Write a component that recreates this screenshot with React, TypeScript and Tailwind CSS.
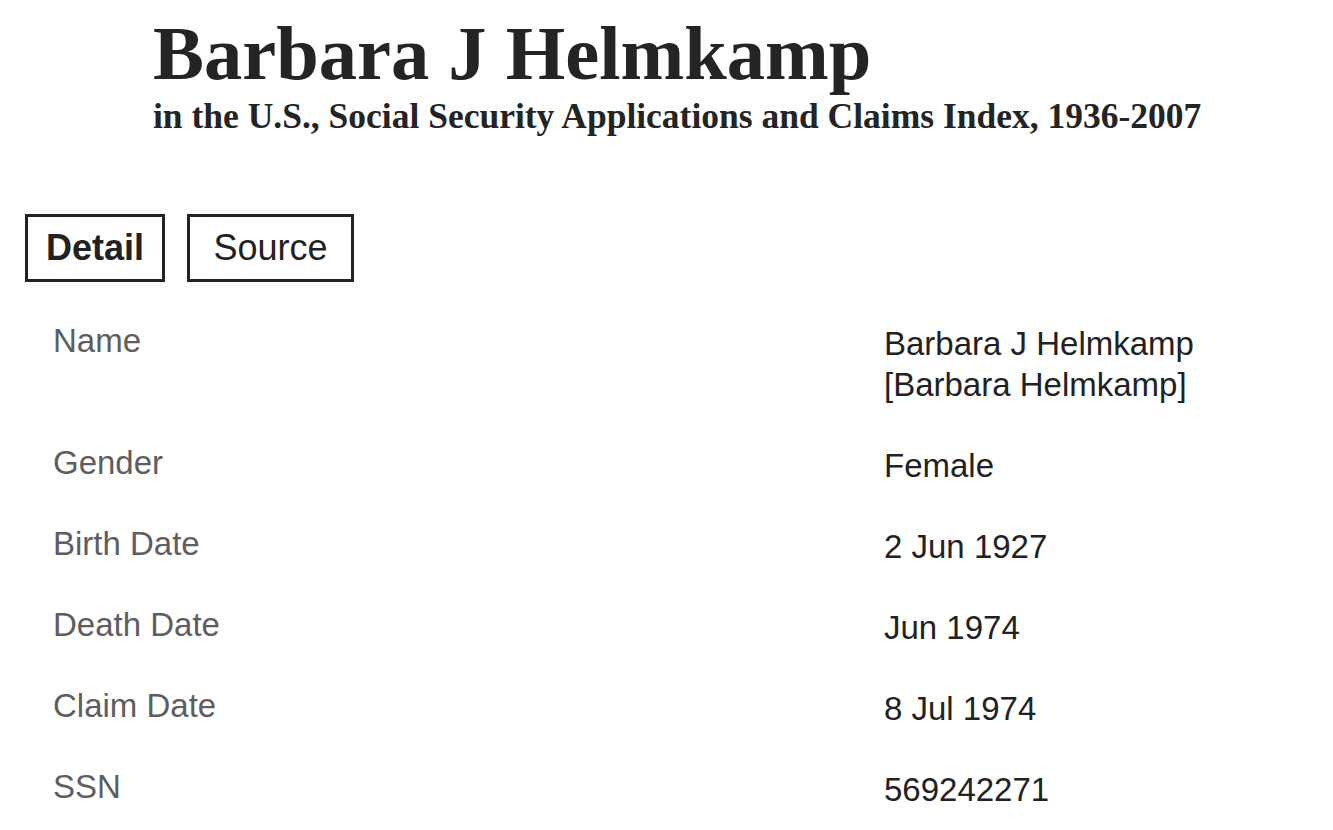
import React from 'react';

const rows: { label: string; values: string[] }[] = [
  { label: 'Name', values: ['Barbara J Helmkamp', '[Barbara Helmkamp]'] },
  { label: 'Gender', values: ['Female'] },
  { label: 'Birth Date', values: ['2 Jun 1927'] },
  { label: 'Death Date', values: ['Jun 1974'] },
  { label: 'Claim Date', values: ['8 Jul 1974'] },
  { label: 'SSN', values: ['569242271'] },
];

export default function App() {
  return (
    <div className="min-h-[830px] bg-white text-[#222] font-['Liberation_Sans',Arial,sans-serif]">
      {/* Record heading */}
      <header className="pl-[153px] pt-[16px] font-['Liberation_Serif','Times_New_Roman',serif] font-bold text-[#242424]">
        <h1 className="text-[76.5px] leading-[76px]">Barbara J Helmkamp</h1>
        <h2 className="mt-[5px] text-[35.5px] leading-[38px]">
          in the U.S., Social Security Applications and Claims Index, 1936-2007
        </h2>
      </header>

      {/* Tabs */}
      <div className="mt-[79px] ml-[25px] flex gap-[22px]">
        <button className="h-[68px] w-[140px] border-[3px] border-[#222] text-[36px] font-bold text-[#222]">
          Detail
        </button>
        <button className="h-[68px] w-[167px] border-[3px] border-[#222] text-[36px] text-[#222]">
          Source
        </button>
      </div>

      {/* Detail table */}
      <div className="mt-[41px] pl-[53px]">
        {rows.map((row) => (
          <div key={row.label} className="flex pb-[40px]">
            <div className="w-[831px] text-[33px] leading-[41px] text-[#5e5e5e] -mt-[3px]">{row.label}</div>
            <div className="text-[33px] leading-[41px] text-[#222]">
              {row.values.map((v) => (
                <div key={v}>{v}</div>
              ))}
            </div>
          </div>
        ))}
      </div>
    </div>
  );
}
